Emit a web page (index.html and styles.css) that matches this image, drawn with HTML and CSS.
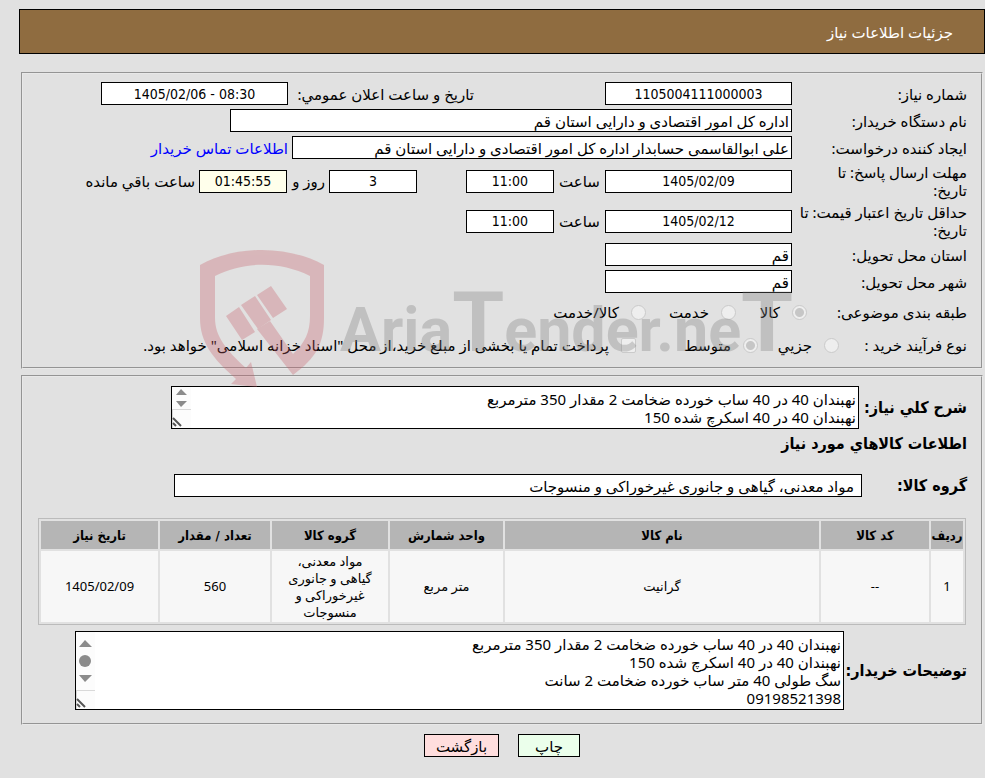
FILE: index.html
```html
<!DOCTYPE html>
<html lang="fa" dir="rtl">
<head>
<meta charset="utf-8">
<title>جزئیات اطلاعات نیاز</title>
<link rel="stylesheet" href="styles.css">
</head>
<body>
<header class="title-bar"><h1>جزئیات اطلاعات نیاز</h1></header>
<main>
  <section class="panel summary">
    <div class="row">
      <label class="name" for="need-no">شماره نیاز:</label>
      <input class="field medium center" id="need-no" value="1105004111000003" readonly>
      <label class="announce" for="announce">تاریخ و ساعت اعلان عمومي:</label>
      <input class="field medium center" id="announce" value="1405/02/06 - 08:30" dir="ltr" readonly>
    </div>
    <div class="row">
      <label class="name" for="buyer">نام دستگاه خریدار:</label>
      <input class="field org" id="buyer" value="اداره کل امور اقتصادی و دارایی استان قم" readonly>
    </div>
    <div class="row">
      <label class="name" for="creator">ایجاد کننده درخواست:</label>
      <input class="field person" id="creator" value="علی ابوالقاسمی حسابدار اداره کل امور اقتصادی و دارایی استان قم" readonly>
      <a class="contact" href="#contact">اطلاعات تماس خریدار</a>
    </div>
    <div class="row tall">
      <label class="name" for="reply-date">مهلت ارسال پاسخ: تا<br>تاریخ:</label>
      <input class="field medium center" id="reply-date" value="1405/02/09" readonly>
      <label class="hour" for="reply-hour">ساعت</label>
      <input class="field short center" id="reply-hour" value="11:00" readonly>
      <input class="field short center days" id="days-left" value="3" readonly>
      <label class="day-text" for="days-left">روز و</label>
      <input class="field short center timer" id="time-left" value="01:45:55" readonly>
      <label class="remaining" for="time-left">ساعت باقي مانده</label>
    </div>
    <div class="row tall">
      <label class="name" for="valid-date">حداقل تاریخ اعتبار قیمت: تا<br>تاریخ:</label>
      <input class="field medium center" id="valid-date" value="1405/02/12" readonly>
      <label class="hour" for="valid-hour">ساعت</label>
      <input class="field short center" id="valid-hour" value="11:00" readonly>
    </div>
    <div class="row">
      <label class="name" for="province">استان محل تحویل:</label>
      <input class="field medium" id="province" value="قم" readonly>
    </div>
    <div class="row">
      <label class="name" for="city">شهر محل تحویل:</label>
      <input class="field medium" id="city" value="قم" readonly>
    </div>
    <div class="row options" role="radiogroup" aria-labelledby="class-name">
      <span class="name" id="class-name">طبقه بندی موضوعی:</span>
      <label class="option goods"><input type="radio" name="class" checked disabled><span>کالا</span></label>
      <label class="option service"><input type="radio" name="class" disabled><span>خدمت</span></label>
      <label class="option"><input type="radio" name="class" disabled><span>کالا/خدمت</span></label>
    </div>
    <div class="row options process" role="radiogroup" aria-labelledby="process-name">
      <span class="name" id="process-name">نوع فرآیند خرید :</span>
      <label class="option minor"><input type="radio" name="process" disabled><span>جزیي</span></label>
      <label class="option middle"><input type="radio" name="process" checked disabled><span>متوسط</span></label>
      <label class="option"><input type="checkbox" disabled><span>پرداخت تمام یا بخشی از مبلغ خرید،از محل "اسناد خزانه اسلامی" خواهد بود.</span></label>
    </div>
    <svg class="watermark" viewBox="0 0 604 140" aria-hidden="true">
      <g class="shield">
        <path d="M0 15C36-5 88-5 124 15V68C124 94 116 108 93 125L57 79 70 71 93 104C105 93 110 82 110 66V26C80 11 44 11 15 26V68C15 86 26 100 46 118L51 112 57 137 31 134 36 129C12 108 0 92 0 68Z"/>
        <path d="M26 66L39 57 55 82 42 90ZM41 55L55 46 71 70 58 79ZM57 45L71 36 87 59 73 68Z"/>
      </g>
      <text class="brand" x="140" y="101">Aria<tspan class="large">T</tspan>ender.ne<tspan class="large">T</tspan></text>
    </svg>
  </section>

  <section class="panel details">
    <div class="row overview">
      <label class="strong" for="overview">شرح کلي نیاز:</label>
      <div class="area">
        <textarea id="overview" rows="2" readonly>نهبندان 40 در 40 ساب خورده ضخامت 2 مقدار 350 مترمربع
نهبندان 40 در 40 اسکرچ شده 150</textarea>
        <svg class="scroll" viewBox="0 0 19 41" aria-hidden="true">
          <path class="track" d="M0 0H19V41H0Z"/>
          <path class="edge" d="M0 22H19V23H1V41H0Z"/>
          <path class="mark" d="M4 8L9 2 15 8ZM4 14H15L9 20Z"/>
          <path class="grip" d="M1 31L9 39M1 36L4 39"/>
        </svg>
      </div>
    </div>
    <h2>اطلاعات کالاهاي مورد نیاز</h2>
    <div class="row group">
      <label class="strong" for="group">گروه کالا:</label>
      <input class="field" id="group" value="مواد معدنی، گیاهی و جانوری غیرخوراکی و منسوجات" readonly>
    </div>
    <table>
      <colgroup><col class="c-row"><col class="c-code"><col class="c-name"><col class="c-unit"><col class="c-group"><col class="c-count"><col class="c-date"></colgroup>
      <thead>
        <tr><th>ردیف</th><th>کد کالا</th><th>نام کالا</th><th>واحد شمارش</th><th>گروه کالا</th><th>تعداد / مقدار</th><th>تاریخ نیاز</th></tr>
      </thead>
      <tbody>
        <tr><td>1</td><td>--</td><td>گرانیت</td><td>متر مربع</td><td class="wrap">مواد معدنی، گیاهی و جانوری غیرخوراکی و منسوجات</td><td>560</td><td>1405/02/09</td></tr>
      </tbody>
    </table>
    <div class="row notes">
      <label class="strong" for="notes">توضیحات خریدار:</label>
      <div class="area">
        <textarea id="notes" rows="4" readonly>نهبندان 40 در 40 ساب خورده ضخامت 2 مقدار 350 مترمربع
نهبندان 40 در 40 اسکرچ شده 150
سگ طولی 40 متر ساب خورده ضخامت 2 سانت
09198521398</textarea>
        <svg class="scroll" viewBox="0 0 19 77" aria-hidden="true">
          <path class="track" d="M0 0H19V77H0Z"/>
          <path class="edge" d="M0 58H19V59H1V77H0Z"/>
          <path class="mark" d="M3 15L9 8 16 15ZM3 43H16L9 50Z"/>
          <circle class="mark" cx="9" cy="29" r="6"/>
          <path class="grip" d="M1 67L9 75M1 72L4 75"/>
        </svg>
      </div>
    </div>
  </section>

  <div class="actions">
    <button class="print" type="button">چاپ</button>
    <button class="back" type="button">بازگشت</button>
  </div>
</main>
</body>
</html>
```
FILE: styles.css
```css
* { box-sizing: border-box; }

body {
  margin: 9px 0 0 19px;
  background: #e1e1e1;
  color: #000;
  font: 15px/18px "Noto Sans", "DejaVu Sans", sans-serif;
}

input, textarea, button { font: inherit; color: inherit; }

.title-bar {
  display: flex;
  align-items: center;
  height: 45px;
  padding: 0 31px;
  border: 1px solid #000;
  background: #8f6c40;
  color: #fff;
}

h1 { margin: 0; font-size: 15px; font-weight: normal; }

main { padding: 18px 2px 0; }

.panel {
  position: relative;
  border: 2px groove #e8e8e8;
  padding: 8px 14px;
}

.summary {
  display: flex;
  flex-direction: column;
  gap: 4px;
  min-height: 296px;
}

.details { margin-top: 6px; padding-top: 9px; min-height: 350px; }

.row { display: flex; align-items: center; white-space: nowrap; }

.name { flex: 0 0 175px; }
.tall { min-height: 36px; }

.field {
  height: 23px;
  border: 1px solid #000;
  padding: 0 2px;
  background: #fff;
}

.center {
  font-family: "DejaVu Sans Condensed", "DejaVu Sans", sans-serif;
  font-size: 14px;
  text-align: center;
}
.medium { width: 187px; }
.short { width: 88px; }
.org { width: 562px; }
.person { width: 500px; }
.announce { width: 186px; margin-right: 131px; }
.contact { margin-right: 4px; color: #00f; text-decoration: none; }
.hour { width: 51px; text-align: center; }
.days { margin-right: 49px; }
.day-text { width: 42px; padding-right: 4px; }
.timer { background: #ffffeb; }
.remaining { margin-right: 4px; }

.options { min-height: 30px; }
.process { min-height: 28px; }
.options .name { flex-basis: 160px; }
.option { display: flex; align-items: center; gap: 12px; }
.goods { width: 71px; }
.service { width: 90px; }
.process .name { flex-basis: 128px; }
.minor { width: 81px; }
.middle { width: 122px; }

.option input {
  appearance: none;
  flex: none;
  width: 15px;
  height: 15px;
  margin: 0;
  border: 1px solid #cacaca;
  background: #eee;
}

.option input[type="radio"] { border-radius: 50%; }
.option input[type="checkbox"] { border-radius: 2px; }
.option input:checked {
  background: radial-gradient(circle, #c6c6c6 0 4px, #eee 5px);
}

.watermark {
  position: absolute;
  top: 176px;
  left: 177px;
  width: 604px;
  height: 140px;
  overflow: visible;
  pointer-events: none;
  z-index: 1;
}

.shield { fill: #c85f69; opacity: 0.32; }
.brand {
  fill: #7d7d7d;
  opacity: 0.32;
  direction: ltr;
  font: bold 61px Roboto, "Liberation Sans", sans-serif;
}
.brand .large { font-size: 84px; }

.strong, h2 {
  font-family: "DejaVu Sans Condensed", "DejaVu Sans", sans-serif;
  font-size: 16px;
  font-weight: bold;
}
h2 { margin: 5px 0 20px; line-height: 20px; }

.area { position: relative; flex: 1; }

textarea {
  display: block;
  width: 100%;
  margin: 0;
  border: 1px solid #000;
  padding: 3px 2px;
  overflow: hidden;
  resize: none;
  background: #fff;
  white-space: pre;
}

.overview .strong { width: 108px; }
.overview .area { margin-left: 134px; }
.overview textarea { height: 43px; }

.group .strong { width: 105px; }
.group .field { flex: 1; margin-left: 137px; padding: 0 7px; }

.notes .strong { width: 123px; }
.notes .area { margin-left: 38px; }
.notes textarea { height: 79px; }

.scroll { position: absolute; top: 1px; left: 1px; width: 19px; }
.track { fill: #fcfcfc; }
.edge { fill: #d9d9d9; }
.mark { fill: #8b8b8b; }
.grip { fill: none; stroke: #555; stroke-width: 2; }

table {
  width: 928px;
  max-width: 100%;
  margin: 21px 1px 6px;
  border: 1px solid #bbb;
  border-spacing: 2px;
  table-layout: fixed;
  font-size: 13px;
  line-height: 17px;
  text-align: center;
}

th, td { padding: 0; }
th {
  height: 28px;
  background: #b5b5b5;
  font-family: "DejaVu Sans Condensed", "DejaVu Sans", sans-serif;
  white-space: nowrap;
}
td { height: 71px; background: #f7f7f7; }
.wrap { padding: 0 8px; }

.c-row { width: 32px; }
.c-code { width: 108px; }
.c-unit { width: 113px; }
.c-group { width: 116px; }
.c-count { width: 110px; }
.c-date { width: 117px; }

.actions { display: flex; justify-content: center; gap: 19px; padding-top: 9px; }
.actions button { height: 23px; border: 1px solid #000; padding: 0 10px; }
.actions .print { width: 62px; background: #ebffeb; }
.actions .back { width: 75px; background: #ffdede; }
```
